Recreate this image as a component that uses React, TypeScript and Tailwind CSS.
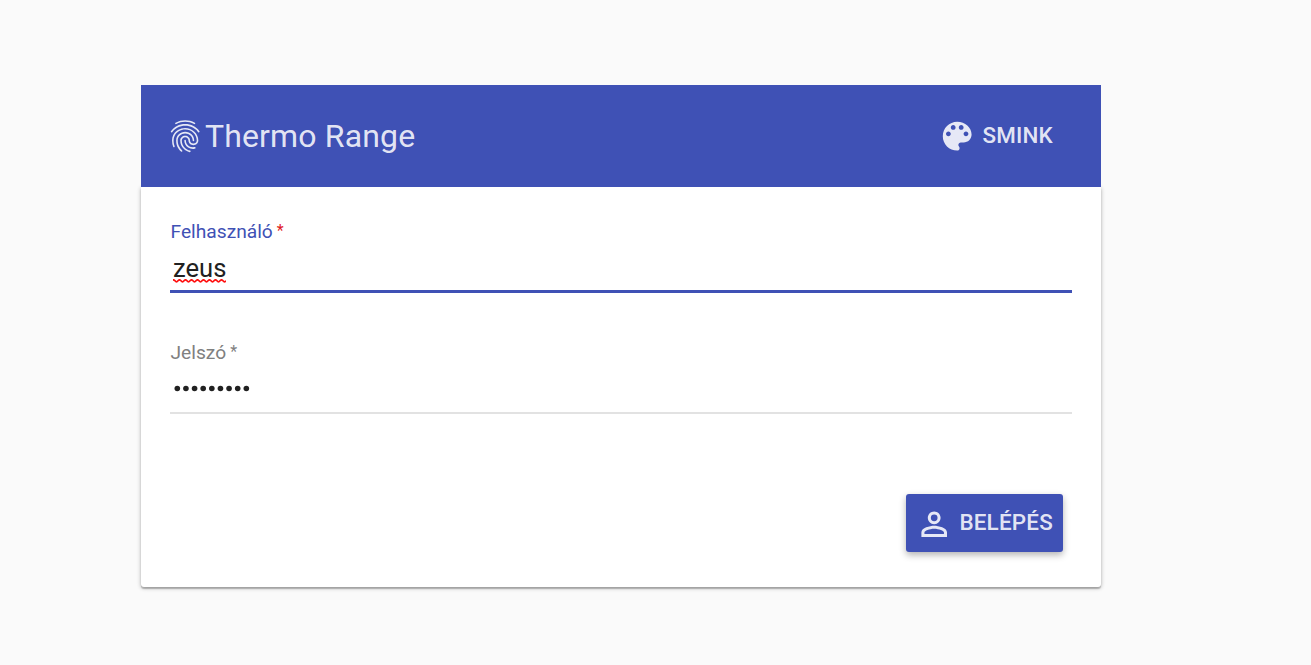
import type { ReactNode } from 'react';
import { MdFingerprint, MdPersonOutline } from 'react-icons/md';

function PaletteIcon() {
  return (
    <svg viewBox="0 0 24 24" className="size-[38.4px] shrink-0" fill="currentColor">
      <path d="M12 3c-4.97 0-9 4.03-9 9s4.03 9 9 9c.83 0 1.5-.67 1.5-1.5 0-.39-.15-.74-.39-1.01-.23-.26-.38-.61-.38-.99 0-.83.67-1.5 1.5-1.5H16c2.76 0 5-2.24 5-5 0-4.42-4.03-8-9-8zm-5.5 9c-.83 0-1.5-.67-1.5-1.5S5.67 9 6.5 9 8 9.67 8 10.5 7.33 12 6.5 12zm3-4C8.67 8 8 7.33 8 6.5S8.67 5 9.5 5s1.5.67 1.5 1.5S10.33 8 9.5 8zm5 0c-.83 0-1.5-.67-1.5-1.5S13.67 5 14.5 5s1.5.67 1.5 1.5S15.33 8 14.5 8zm3 4c-.83 0-1.5-.67-1.5-1.5S16.67 9 17.5 9s1.5.67 1.5 1.5-.67 1.5-1.5 1.5z" />
    </svg>
  );
}

function SpellingMark() {
  const steps = Array.from({ length: 9 }, () => 'q1.5 -2 3 0 t3 0').join(' ');
  return (
    <svg className="absolute top-[27px] left-0 h-1 w-[53px]" viewBox="0 0 53 4" fill="none">
      <path d={`M-1 1.8 ${steps}`} stroke="#ff1010" strokeWidth="1.7" />
    </svg>
  );
}

function PasswordDots() {
  return (
    <svg className="h-[31px] w-20" viewBox="0 0 80 31" fill="#212121">
      {Array.from({ length: 9 }, (_, i) => (
        <circle key={i} cx={4.3 + i * 8.63} cy="15.5" r="2.8" />
      ))}
    </svg>
  );
}

function Field({ label, active = false, children }: { label: string; active?: boolean; children: ReactNode }) {
  return (
    <div
      className={
        active
          ? 'flex h-[75px] flex-col border-b-3 border-[#3f51b5]'
          : 'flex h-[75px] flex-col border-b-2 border-[#e2e2e2]'
      }
    >
      <label className={active ? 'flex h-7 text-[19.2px] leading-7 text-[#3f51b5]' : 'flex h-7 text-[19.2px] leading-7 text-[#808080]'}>
        <span className="pl-[0.5px]">{label}</span>
        <span className={active ? 'ml-1 text-[16px] leading-[26px] text-[#e01b24]' : 'ml-1 text-[16px] leading-[26px]'}>*</span>
      </label>
      <div className="flex pt-1.5 pl-[3px] text-[25.6px] leading-8 text-[#212121]">{children}</div>
    </div>
  );
}

export default function App() {
  return (
    <div className="flex h-[665px] w-full items-start bg-[#fafafa] pt-[85px] pl-[141px] font-[Roboto,sans-serif]">
      <main className="w-[960px]">
        <header className="relative z-10 flex h-[102px] items-center justify-between bg-[#3f51b5] pr-12 pl-[25px] text-white/87">
          <div className="flex items-center gap-[0.5px]">
            <MdFingerprint className="size-[38.4px]" />
            <h1 className="text-[32px] leading-10 tracking-[0.16px]">Thermo Range</h1>
          </div>
          <button className="flex items-center gap-[5.6px] text-[22.4px] font-medium tracking-[0.22px]">
            <PaletteIcon />
            SMINK
          </button>
        </header>
        <section className="flex h-[400px] flex-col rounded-b-[3px] bg-white px-[29px] pt-[31px] shadow-[0_1px_4px_rgba(0,0,0,0.3),0_2px_1px_rgba(0,0,0,0.2)]">
          <Field label="Felhasználó" active>
            <span className="relative">
              zeus
              <SpellingMark />
            </span>
          </Field>
          <div className="mt-[46px]">
            <Field label="Jelszó">
              <PasswordDots />
            </Field>
          </div>
          <button className="mt-20 mr-[9px] flex h-[58px] w-[157px] items-center gap-1.5 self-end rounded-[3px] bg-[#3f51b5] pl-[9px] text-[22.4px] font-medium tracking-[0.22px] text-white/87 shadow-[0_3px_7px_rgba(0,0,0,0.3)]">
            <MdPersonOutline className="mt-0.5 size-[38.4px] shrink-0" />
            BELÉPÉS
          </button>
        </section>
      </main>
    </div>
  );
}
